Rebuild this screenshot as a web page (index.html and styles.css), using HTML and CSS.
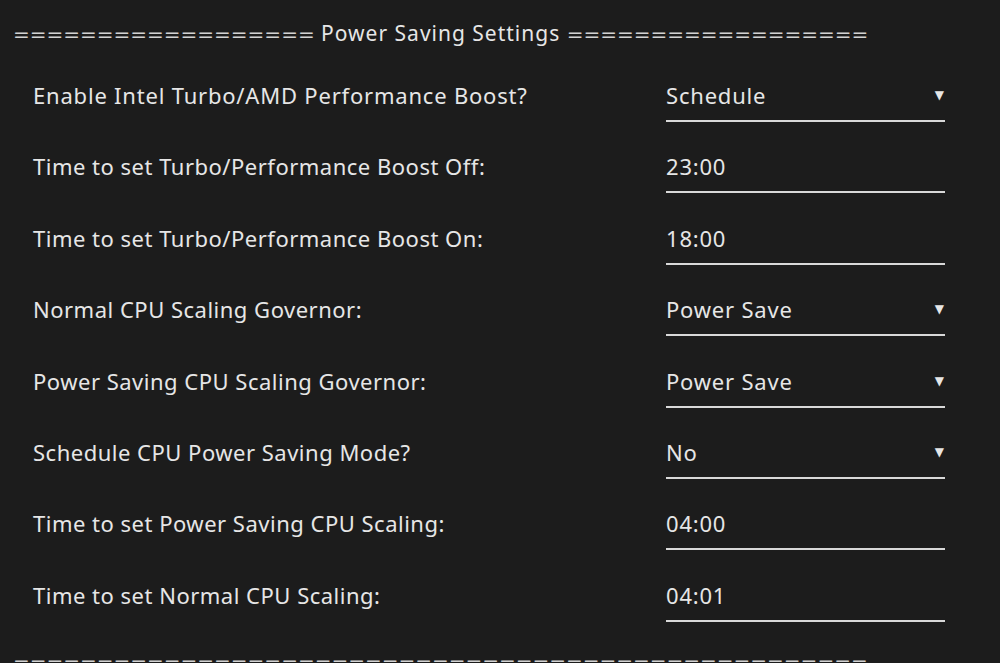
FILE: index.html
```html
<!DOCTYPE html>
<html lang="en">
<head>
    <meta charset="UTF-8">
    <meta name="viewport" content="width=device-width, initial-scale=1.0">
    <title>Power Saving Settings</title>
    <link rel="stylesheet" href="styles.css">
</head>
<body>
    <div class="section-title">==================<span class="title-text"> Power Saving Settings </span>==================</div>

    <div class="settings">
        <div class="row">
            <label class="label wide">Enable Intel Turbo/AMD Performance Boost?</label>
            <div class="field select"><span>Schedule</span><span class="arrow">&#9660;</span></div>
        </div>
        <div class="row">
            <label class="label">Time to set Turbo/Performance Boost Off:</label>
            <div class="field"><span>23:00</span></div>
        </div>
        <div class="row">
            <label class="label">Time to set Turbo/Performance Boost On:</label>
            <div class="field"><span>18:00</span></div>
        </div>
        <div class="row">
            <label class="label">Normal CPU Scaling Governor:</label>
            <div class="field select"><span>Power Save</span><span class="arrow">&#9660;</span></div>
        </div>
        <div class="row">
            <label class="label">Power Saving CPU Scaling Governor:</label>
            <div class="field select"><span>Power Save</span><span class="arrow">&#9660;</span></div>
        </div>
        <div class="row">
            <label class="label">Schedule CPU Power Saving Mode?</label>
            <div class="field select"><span>No</span><span class="arrow">&#9660;</span></div>
        </div>
        <div class="row">
            <label class="label">Time to set Power Saving CPU Scaling:</label>
            <div class="field"><span>04:00</span></div>
        </div>
        <div class="row">
            <label class="label">Time to set Normal CPU Scaling:</label>
            <div class="field"><span>04:01</span></div>
        </div>
    </div>

    <div class="section-title end">===================================================</div>
</body>
</html>
```

FILE: styles.css
```css
html, body {
    height: 663px;
    overflow: hidden;
}
body {
    font-family: "Noto Sans", "Open Sans", sans-serif;
    font-size: 22px;
    letter-spacing: 0.5px;
    margin: 0;
    padding: 0;
    background-color: #1c1c1c;
    color: #e6e6e6;
}
.section-title {
    font-family: "DejaVu Sans", sans-serif;
    font-size: 20px;
    letter-spacing: 0;
    padding: 21px 0 0 13px;
    line-height: 24px;
    white-space: nowrap;
    color: #d2d2d2;
}
.section-title .title-text {
    font-family: "Noto Sans", "Open Sans", sans-serif;
    font-size: 21px;
    letter-spacing: 1px;
    color: #e6e6e6;
}
.section-title.end {
    padding-top: 0;
    margin-top: -4px;
}
.settings {
    padding-top: 37px;
}
.row {
    display: flex;
    align-items: flex-start;
    height: 71.4px;
    padding-left: 33px;
}
.label {
    width: 633px;
    line-height: 24px;
}
.label.wide {
    letter-spacing: 0.8px;
}
.field {
    display: flex;
    justify-content: space-between;
    width: 279px;
    line-height: 24px;
    padding-bottom: 13px;
    border-bottom: 2px solid #d8d8d8;
}
.field span:first-child {
    letter-spacing: 0.8px;
}
.arrow {
    font-family: "DejaVu Sans", sans-serif;
    font-size: 12px;
    letter-spacing: 0;
    padding-right: 1px;
}
```
